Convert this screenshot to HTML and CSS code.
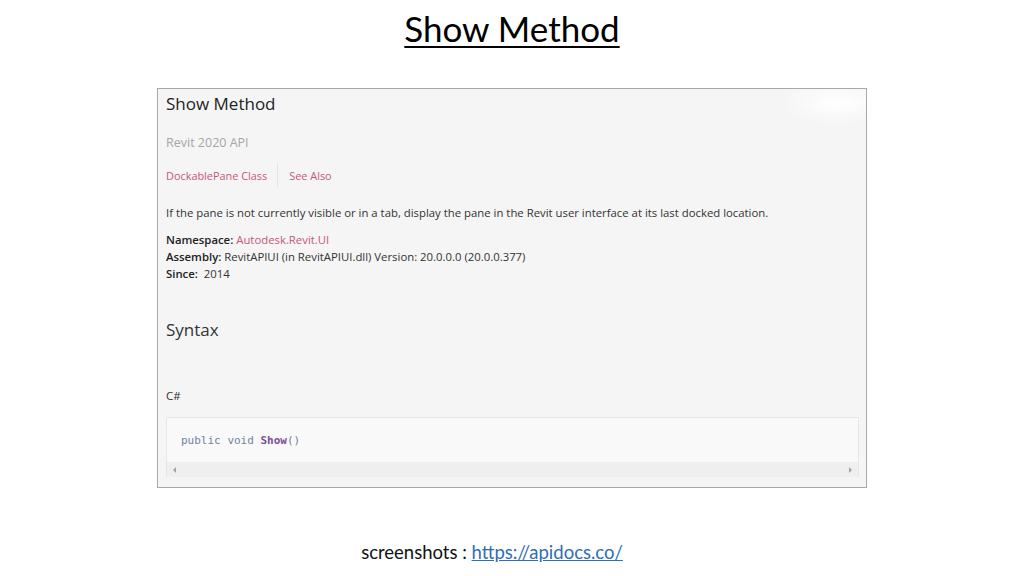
FILE: index.html
```html
<!DOCTYPE html>
<html>
<head>
<meta charset="utf-8">
<link rel="stylesheet" href="styles.css">
</head>
<body>
<div class="slide">
  <h1 class="slide-title">Show Method</h1>
  <div class="doc">
    <h2 class="doc-title">Show Method</h2>
    <div class="doc-api">Revit 2020 API</div>
    <div class="doc-links">
      <a class="doc-link">DockablePane Class</a>
      <span class="doc-sep"></span>
      <a class="doc-link">See Also</a>
    </div>
    <p class="doc-desc">If the pane is not currently visible or in a tab, display the pane in the Revit user interface at its last docked location.</p>
    <div class="doc-meta">
      <div><b>Namespace:</b> <a class="doc-link">Autodesk.Revit.UI</a></div>
      <div><b>Assembly:</b> RevitAPIUI (in RevitAPIUI.dll) Version: 20.0.0.0 (20.0.0.377)</div>
      <div><b>Since:</b>&nbsp; 2014</div>
    </div>
    <h3 class="doc-h3">Syntax</h3>
    <div class="doc-lang">C#</div>
    <div class="code">
      <pre class="code-text"><span class="kw">public</span> <span class="kw">void</span> <span class="fn">Show</span>()</pre>
      <div class="scrollbar">
        <span class="arrow arrow-left"></span>
        <span class="arrow arrow-right"></span>
      </div>
    </div>
  </div>
  <div class="footer">screenshots : <a class="footer-link">https://apidocs.co/</a></div>
</div>
</body>
</html>
```

FILE: styles.css
```css
html, body {
  margin: 0;
  padding: 0;
  background: #ffffff;
}

.slide {
  width: 1024px;
  height: 576px;
  display: flex;
  flex-direction: column;
  align-items: center;
}

.slide-title {
  margin: 8px 0 0 0;
  font-family: Lato, "Open Sans", sans-serif;
  font-weight: 400;
  font-size: 35px;
  line-height: 40px;
  color: #000;
  text-decoration: underline;
  text-decoration-thickness: 2px;
  text-underline-offset: 4px;
}

.doc {
  margin-top: 40px;
  width: 693px;
  height: 398px;
  border: 1px solid #a8a8a8;
  background: radial-gradient(ellipse 60px 22px at 680px 14px, #ffffff 0%, rgba(255,255,255,0) 100%), #f5f5f5;
  font-family: "Open Sans", sans-serif;
  color: #333;
  padding: 0 7px 0 8px;
  box-sizing: content-box;
  display: flex;
  flex-direction: column;
}

.doc-title {
  margin: 0;
  font-size: 17px;
  font-weight: 400;
  line-height: 30px;
  color: #222;
}

.doc-api {
  margin-top: 14px;
  font-size: 12.5px;
  line-height: 20px;
  color: #a6a6a6;
}

.doc-links {
  margin-top: 12px;
  display: flex;
  align-items: center;
  height: 20px;
  font-size: 10.9px;
}

.doc-link {
  color: #c4577f;
}

.doc-sep {
  width: 1px;
  height: 24px;
  background: #e4e4e4;
  margin: 0 11px 0 10px;
}

.doc-desc {
  margin: 18px 0 0 0;
  font-size: 11.35px;
  line-height: 20px;
}

.doc-meta {
  margin-top: 8px;
  font-size: 11.35px;
  line-height: 17px;
}

.doc-meta b {
  font-weight: 600;
  color: #222;
}

.doc-h3 {
  margin: 33px 0 0 0;
  font-size: 17px;
  font-weight: 400;
  line-height: 30px;
  color: #333;
}

.doc-lang {
  margin-top: 41px;
  font-size: 11.5px;
  line-height: 20px;
}

.code {
  margin-top: 11px;
  border: 1px solid #e6e6e6;
  border-bottom: none;
  background: #f9f9f9;
  display: flex;
  flex-direction: column;
}

.code-text {
  margin: 0;
  padding: 13px 14px 0 14px;
  height: 31px;
  font-family: "DejaVu Sans Mono", monospace;
  font-size: 11px;
  line-height: 20px;
  color: #6d7f9c;
}

.kw {
  color: #6f83a3;
}

.fn {
  color: #7a4f94;
  font-weight: 600;
}

.scrollbar {
  height: 15px;
  background: #efefef;
  display: flex;
  align-items: center;
  justify-content: space-between;
  padding: 0 6px;
}

.arrow {
  width: 0;
  height: 0;
  border-top: 3px solid transparent;
  border-bottom: 3px solid transparent;
}

.arrow-left {
  border-right: 3px solid #a3a3a3;
}

.arrow-right {
  border-left: 3px solid #a3a3a3;
}

.footer {
  margin-top: 53px;
  margin-right: 40px;
  font-family: Lato, "Open Sans", sans-serif;
  font-size: 18.5px;
  line-height: 22px;
  color: #111;
}

.footer-link {
  color: #2f6db5;
  text-decoration: underline;
}
```
